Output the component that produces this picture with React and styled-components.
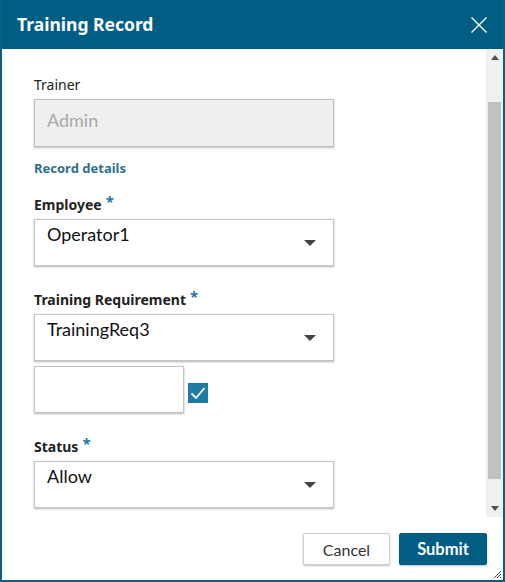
import React from "react";
import styled, { createGlobalStyle } from "styled-components";

const Global = createGlobalStyle`
  html, body { margin: 0; padding: 0; background: #ffffff; }
  body { font-family: "Lato", "Noto Sans", sans-serif; }
  * { box-sizing: border-box; }
`;

const Dialog = styled.div`
  position: relative;
  width: 505px;
  height: 582px;
  border: 2px solid #0a5f84;
  border-top: none;
  display: flex;
  flex-direction: column;
  background: #ffffff;
  overflow: hidden;
`;

const Header = styled.div`
  height: 49px;
  margin: 0 -2px;
  background: #005e85;
  display: flex;
  align-items: center;
  justify-content: space-between;
  padding: 0 18px 0 17px;
  flex-shrink: 0;
`;

const Title = styled.h1`
  margin: 0;
  font-family: "Noto Sans", sans-serif;
  font-size: 17.5px;
  font-weight: 700;
  color: #ffffff;
  line-height: 22px;
  padding-bottom: 2px;
`;

const CloseButton = styled.button`
  border: none;
  background: transparent;
  padding: 0;
  width: 16px;
  height: 16px;
  display: flex;
  cursor: pointer;
  margin-top: 1px;
`;

const Body = styled.div`
  flex: 1;
  display: flex;
  min-height: 0;
`;

const Content = styled.div`
  flex: 1;
  overflow: hidden;
  padding: 27px 0 0 32px;
`;

const Scrollbar = styled.div`
  width: 17px;
  background: #f0f0f0;
  display: flex;
  flex-direction: column;
  flex-shrink: 0;
`;

const ScrollButton = styled.div`
  height: 17px;
  display: flex;
  align-items: center;
  justify-content: center;
`;

const Track = styled.div`
  flex: 1;
  padding: 36px 2px 0 2px;
`;

const Thumb = styled.div`
  height: 377px;
  background: #c1c1c1;
`;

const Label = styled.label`
  display: block;
  font-family: "Noto Sans", sans-serif;
  font-size: 14px;
  line-height: 18px;
  color: #222222;
  font-weight: ${(p) => (p.$bold ? 700 : 400)};
  margin: ${(p) => p.$mt || 0}px 0 5px 0;
`;

const Required = styled.span`
  color: #1d7aa0;
  font-weight: 700;
  font-size: 15px;
  margin-left: 4px;
  position: relative;
  top: -3px;
`;

const SectionTitle = styled.div`
  font-family: "Noto Sans", sans-serif;
  font-size: 13px;
  font-weight: 700;
  line-height: 18px;
  color: #2d6f8e;
  margin: 12px 0 18px 0;
`;

const ReadOnlyInput = styled.div`
  width: 300px;
  height: 48px;
  border: 1px solid #bdbdbd;
  background: #efefef;
  box-shadow: 0 1px 2px rgba(0, 0, 0, 0.25);
  padding: 9px 12px 0 12px;
  font-size: 18px;
  color: #a9a9a9;
`;

const Select = styled.div`
  position: relative;
  width: 300px;
  height: 47px;
  border: 1px solid #c4c4c4;
  background: #ffffff;
  box-shadow: 0 1px 2px rgba(0, 0, 0, 0.3);
  padding: 3px 40px 0 12px;
  font-size: 18px;
  color: #111111;
  display: flex;
  align-items: flex-start;
`;

const Caret = styled.span`
  position: absolute;
  right: 17px;
  top: 20px;
  width: 0;
  height: 0;
  border-left: 6px solid transparent;
  border-right: 6px solid transparent;
  border-top: 6px solid #444444;
`;

const InlineRow = styled.div`
  display: flex;
  align-items: flex-start;
  margin-top: 5px;
`;

const SmallInput = styled.div`
  width: 150px;
  height: 47px;
  border: 1px solid #c4c4c4;
  background: #ffffff;
  box-shadow: 0 1px 2px rgba(0, 0, 0, 0.3);
`;

const Check = styled.div`
  width: 20px;
  height: 20px;
  margin: 17px 0 0 4px;
  background: #1f7ba1;
  display: flex;
  align-items: center;
  justify-content: center;
`;

const Footer = styled.div`
  height: 63px;
  flex-shrink: 0;
  display: flex;
  justify-content: flex-end;
  align-items: flex-start;
  gap: 9px;
  padding: 16px 16px 0 0;
`;

const Button = styled.button`
  height: 32px;
  width: ${(p) => p.$w}px;
  font-family: "Lato", "Noto Sans", sans-serif;
  font-size: ${(p) => (p.$primary ? 16.5 : 16)}px;
  border-radius: 2px;
  cursor: pointer;
  font-weight: ${(p) => (p.$primary ? 700 : 400)};
  background: ${(p) => (p.$primary ? "#005e85" : "#ffffff")};
  color: ${(p) => (p.$primary ? "#ffffff" : "#333333")};
  border: 1px solid ${(p) => (p.$primary ? "#005e85" : "#cfcfcf")};
  box-shadow: 0 1px 2px rgba(0, 0, 0, 0.25);
  padding: 0;
`;

const Grip = styled.svg`
  position: absolute;
  right: 1px;
  bottom: 1px;
`;

function Field({ label, required, value, mt }) {
  return (
    <>
      <Label $bold $mt={mt}>
        {label}
        {required && <Required>*</Required>}
      </Label>
      <Select>
        {value}
        <Caret />
      </Select>
    </>
  );
}

export default function App() {
  return (
    <>
      <Global />
      <Dialog>
        <Header>
          <Title>Training Record</Title>
          <CloseButton aria-label="Close">
            <svg width="16" height="16" viewBox="0 0 16 16">
              <path d="M0.5 0.5 L15.5 15.5 M15.5 0.5 L0.5 15.5" stroke="#ffffff" strokeWidth="1.4" fill="none" />
            </svg>
          </CloseButton>
        </Header>
        <Body>
          <Content>
            <Label>Trainer</Label>
            <ReadOnlyInput>Admin</ReadOnlyInput>
            <SectionTitle>Record details</SectionTitle>
            <Field label="Employee" required value="Operator1" />
            <Field label="Training Requirement" required value="TrainingReq3" mt={24} />
            <InlineRow>
              <SmallInput />
              <Check>
                <svg width="16" height="16" viewBox="0 0 16 16">
                  <path d="M1.5 8.5 L6 13 L14.5 3" stroke="#ffffff" strokeWidth="1.8" fill="none" />
                </svg>
              </Check>
            </InlineRow>
            <Field label="Status" required value="Allow" mt={24} />
          </Content>
          <Scrollbar>
            <ScrollButton>
              <svg width="8" height="5" viewBox="0 0 8 5">
                <path d="M0 5 L4 0 L8 5 Z" fill="#505050" />
              </svg>
            </ScrollButton>
            <Track>
              <Thumb />
            </Track>
            <ScrollButton>
              <svg width="8" height="5" viewBox="0 0 8 5">
                <path d="M0 0 L8 0 L4 5 Z" fill="#505050" />
              </svg>
            </ScrollButton>
          </Scrollbar>
        </Body>
        <Footer>
          <Button $w={87}>Cancel</Button>
          <Button $w={88} $primary>Submit</Button>
        </Footer>
        <Grip width="10" height="10" viewBox="0 0 10 10">
          <path d="M9 2 L2 9 M9 5 L5 9 M9 8 L8 9" stroke="#555555" strokeWidth="1" />
        </Grip>
      </Dialog>
    </>
  );
}
